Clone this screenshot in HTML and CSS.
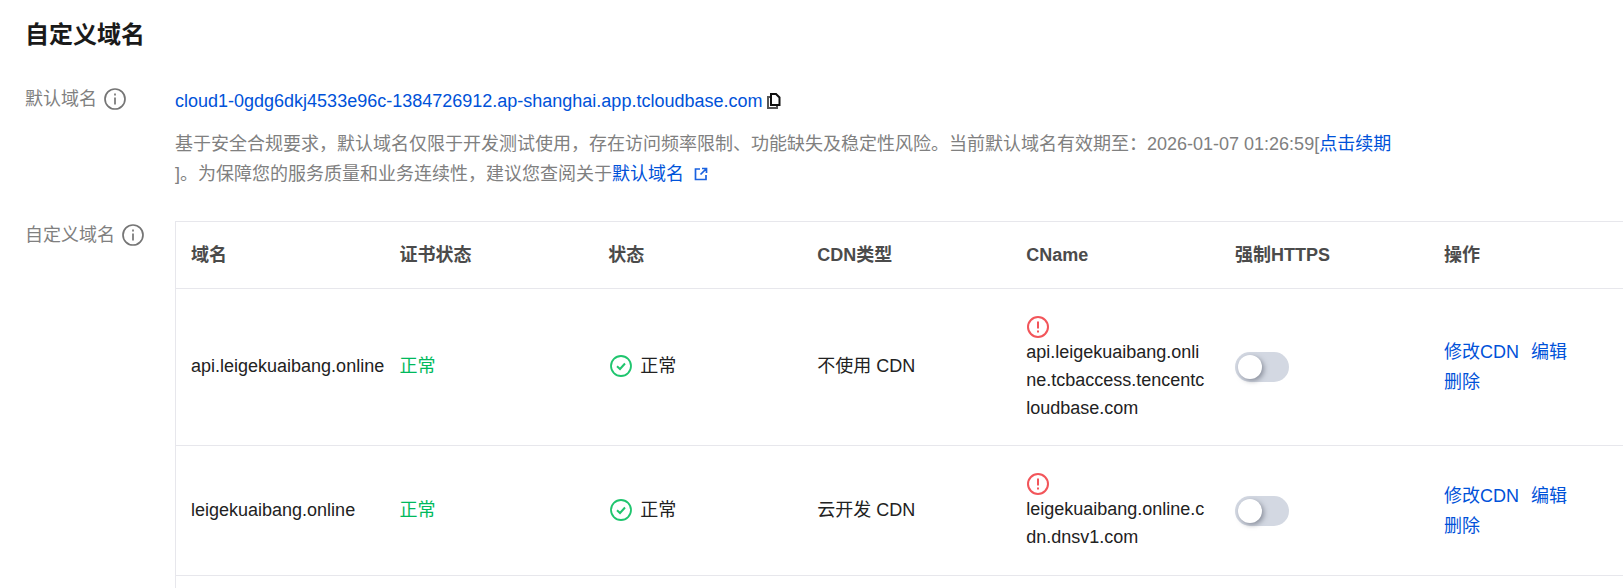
FILE: index.html
```html
<!DOCTYPE html>
<html lang="zh-CN">
<head>
<meta charset="utf-8">
<title>自定义域名</title>
<link rel="stylesheet" href="styles.css">
</head>
<body>
<main class="page">
  <h1 class="title">自定义域名</h1>
  <section class="form-row default-row">
    <div class="label">默认域名 <svg class="info" viewBox="0 0 22 22"><circle cx="11" cy="11" r="10" /><path d="M11 9.500v7M11 5.500v2" /></svg></div>
    <div class="content">
      <div class="domain"><a href="#">cloud1-0gdg6dkj4533e96c-1384726912.ap-shanghai.app.tcloudbase.com</a>
        <svg class="copy" viewBox="0 0 14 16"><path class="copy-back" d="M3 4H1v11h9v-2" /><path class="copy-front" d="M4 1h5l3.500 3.500V12H4z" /></svg>
      </div>
      <p class="desc">基于安全合规要求，默认域名仅限于开发测试使用，存在访问频率限制、功能缺失及稳定性风险。当前默认域名有效期至：2026-01-07 01:26:59[<a class="renew" href="#">点击续期</a>]。为保障您的服务质量和业务连续性，建议您查阅关于<a href="#">默认域名</a><svg class="ext" viewBox="0 0 14 14"><path d="M6 2H1.500v10.500H12V8M8 1.500h4.500V6M12 2L6.500 7.500" /></svg></p>
    </div>
  </section>
  <section class="form-row">
    <div class="label label-custom">自定义域名 <svg class="info" viewBox="0 0 22 22"><circle cx="11" cy="11" r="10" /><path d="M11 9.500v7M11 5.500v2" /></svg></div>
    <table class="table">
      <thead>
        <tr><th>域名</th><th>证书状态</th><th>状态</th><th>CDN类型</th><th>CName</th><th>强制HTTPS</th><th>操作</th></tr>
      </thead>
      <tbody>
        <tr class="row-a">
          <td>api.leigekuaibang.online</td>
          <td class="ok">正常</td>
          <td><span class="status"><svg class="check" viewBox="0 0 22 22"><circle cx="11" cy="11" r="10" /><path d="M7 11.300l3 2.700 5-5.500" /></svg>正常</span></td>
          <td>不使用 CDN</td>
          <td class="cname"><svg class="warn" viewBox="0 0 22 22"><circle cx="11" cy="11" r="10" /><path d="M11 5.500v7M11 14.500v2" /></svg><div>api.leigekuaibang.online.tcbaccess.tencentcloudbase.com</div></td>
          <td class="flush"><span class="switch"><span class="knob"></span></span></td>
          <td class="ops"><a href="#">修改CDN</a><a href="#">编辑</a><a href="#">删除</a></td>
        </tr>
        <tr class="row-b">
          <td>leigekuaibang.online</td>
          <td class="ok">正常</td>
          <td><span class="status"><svg class="check" viewBox="0 0 22 22"><circle cx="11" cy="11" r="10" /><path d="M7 11.300l3 2.700 5-5.500" /></svg>正常</span></td>
          <td>云开发 CDN</td>
          <td class="cname"><svg class="warn" viewBox="0 0 22 22"><circle cx="11" cy="11" r="10" /><path d="M11 5.500v7M11 14.500v2" /></svg><div>leigekuaibang.online.cdn.dnsv1.com</div></td>
          <td class="flush"><span class="switch"><span class="knob"></span></span></td>
          <td class="ops"><a href="#">修改CDN</a><a href="#">编辑</a><a href="#">删除</a></td>
        </tr>
        <tr class="row-next"><td colspan="7"></td></tr>
      </tbody>
    </table>
  </section>
</main>
</body>
</html>
```
FILE: styles.css
```css
html, body { margin: 0; height: 100%; overflow: hidden; background: #fff; }
body { font-family: "Liberation Sans", "Noto Sans CJK SC", sans-serif; font-size: 18px; color: #222; }
a { color: #0052d9; text-decoration: none; }
.page { padding: 20px 0 0 25px; width: 1623px; height: 588px; overflow: hidden; box-sizing: border-box; }
.title { margin: 0 0 36px; font-size: 24px; line-height: 30px; font-weight: 700; color: #1a1a1a; }
.form-row { display: flex; align-items: flex-start; }
.default-row { margin-bottom: 32px; }
.label { width: 150px; flex: none; display: flex; align-items: center; gap: 7px; color: #808080; font-size: 18px; line-height: 26px; }
.label-custom { margin-top: 1px; }
.info { width: 22px; height: 22px; fill: none; stroke: #757575; stroke-width: 1.700; }
.content { width: 1218px; }
.domain { display: flex; align-items: center; gap: 5px; line-height: 30px; height: 30px; margin-bottom: 13px; }
.copy { width: 14px; height: 16px; fill: none; }
.copy-back { stroke: #555; stroke-width: 2; }
.copy-front { stroke: #111; stroke-width: 2; }
.desc { margin: 0; color: #808080; line-height: 30px; }
.renew { display: inline-block; }
.ext { width: 14px; height: 14px; margin-left: 10px; vertical-align: -1px; fill: none; stroke: #1a62e0; stroke-width: 1.700; }
.table { width: 1463px; flex: none; table-layout: fixed; border-collapse: collapse; border-left: 1px solid #e7e7ec; border-top: 1px solid #e7e7ec; }
.table th { height: 67px; padding: 0 15px; text-align: left; font-weight: 700; line-height: 30px; color: #4b4b4b; border-bottom: 1px solid #e7e7ec; box-sizing: border-box; }
.table td { padding: 0 15px 2px; line-height: 30px; border-bottom: 1px solid #e7e7ec; box-sizing: border-box; vertical-align: middle; }
.row-a td { height: 157px; }
.row-b td { height: 130px; }
.table .row-next td { height: 13px; padding: 0; line-height: 1px; border-bottom: none; }
.ok { color: #00b95c; }
.status { display: flex; align-items: center; gap: 8px; margin-left: 2px; }
.check { width: 22px; height: 22px; fill: none; stroke: #1fc56e; stroke-width: 1.800; }
.check path { stroke-width: 2; }
.warn { display: block; width: 22px; height: 22px; margin-left: 1px; fill: none; stroke: #f2555a; stroke-width: 2; }
.cname div { line-height: 28px; word-break: break-all; }
.table td.cname { padding: 3px 15px 0; }
.table td.flush { padding-bottom: 0; }
.switch { display: block; width: 54px; height: 30px; border-radius: 15px; background: #d3d8e2; position: relative; }
.knob { position: absolute; left: 3px; top: 3px; width: 24px; height: 24px; border-radius: 50%; background: #fff; box-shadow: 2px 2px 5px rgba(80, 85, 100, .55); }
.table td.ops { padding: 0 24px 0 15px; }
.ops a { margin-right: 12px; display: inline-block; }
```
